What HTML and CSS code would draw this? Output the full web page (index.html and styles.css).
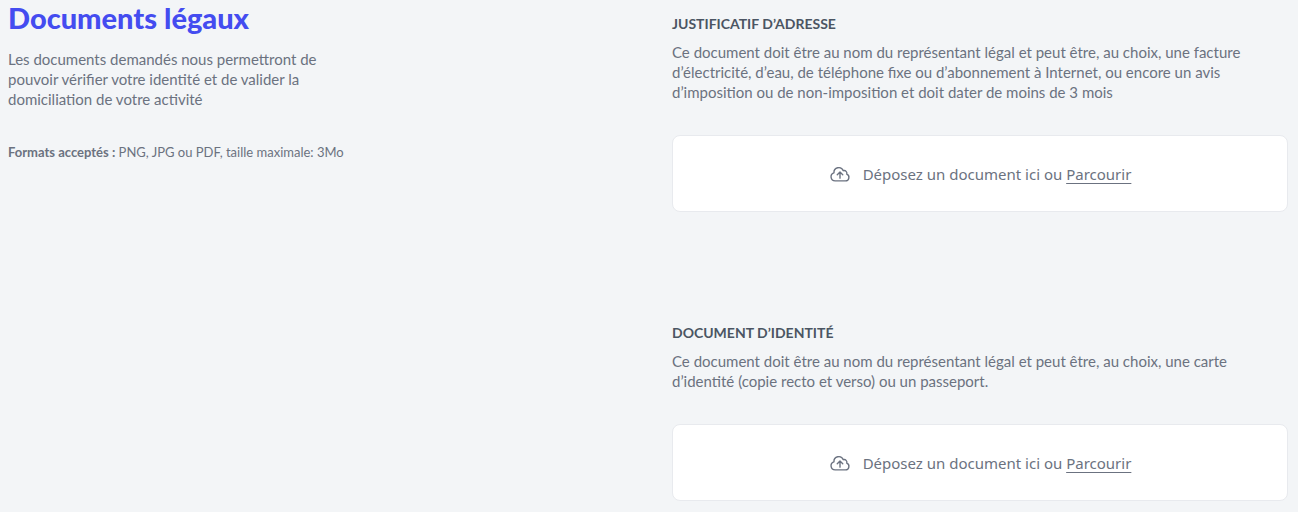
FILE: index.html
```
<!DOCTYPE html>
<html lang="fr">
<head>
    <meta charset="UTF-8">
    <meta name="viewport" content="width=device-width, initial-scale=1.0">
    <title>Documents légaux</title>
    <link rel="stylesheet" href="styles.css">
</head>

<body>
    <main class="documents">
        <section class="intro">
            <h1>Documents légaux</h1>
            <p class="description">Les documents demandés nous permettront de pouvoir vérifier votre identité et de valider la domiciliation de votre activité</p>
            <p class="formats"><strong>Formats acceptés :</strong> PNG, JPG ou PDF, taille maximale: 3Mo</p>
        </section>

        <form class="uploads">
            <section class="upload">
                <h2>Justificatif d’adresse</h2>
                <p class="description">Ce document doit être au nom du représentant légal et peut être, au choix, une facture d’électricité, d’eau, de téléphone fixe ou d’abonnement à Internet, ou encore un avis d’imposition ou de non-imposition et doit dater de moins de 3 mois</p>
                <label class="dropzone" for="adresse">
                    <svg class="upload-icon" viewBox="0 0 24 24" aria-hidden="true">
                        <path d="M6.8 19.5a4.5 4.5 0 0 1-1.4-8.8 5.3 5.3 0 0 1 10.2-2.3 3 3 0 0 1 3.8 3.8 3.8 3.8 0 0 1-1.4 7.3H6.8z"/>
                        <path d="M12 16.5V9.8m-3 3 3-3 3 3"/>
                    </svg>
                    <span>Déposez un document ici ou <span class="browse">Parcourir</span></span>
                </label>
                <input type="file" id="adresse" name="adresse" accept=".png,.jpg,.pdf">
            </section>

            <section class="upload">
                <h2>Document d’identité</h2>
                <p class="description">Ce document doit être au nom du représentant légal et peut être, au choix, une carte d’identité (copie recto et verso) ou un passeport.</p>
                <label class="dropzone" for="identite">
                    <svg class="upload-icon" viewBox="0 0 24 24" aria-hidden="true">
                        <path d="M6.8 19.5a4.5 4.5 0 0 1-1.4-8.8 5.3 5.3 0 0 1 10.2-2.3 3 3 0 0 1 3.8 3.8 3.8 3.8 0 0 1-1.4 7.3H6.8z"/>
                        <path d="M12 16.5V9.8m-3 3 3-3 3 3"/>
                    </svg>
                    <span>Déposez un document ici ou <span class="browse">Parcourir</span></span>
                </label>
                <input type="file" id="identite" name="identite" accept=".png,.jpg,.pdf">
            </section>
        </form>
    </main>
</body>
</html>
```

FILE: styles.css
```
/* General Styles */
* {
    box-sizing: border-box;
}

body {
    margin: 0;
    background-color: #f3f5f7;
    color: #6b7280;
    font-family: Lato, "Noto Sans", sans-serif;
}

h1, h2, p {
    margin: 0;
}

/* Two columns */
.documents {
    display: grid;
    grid-template-columns: 1fr 1fr;
    gap: 48px;
    padding: 0 10px 0 8px;
}

/* Left column */
h1 {
    color: #444cf0;
    font-size: 29px;
    font-weight: 900;
    line-height: 36px;
}

.description {
    font-size: 15px;
    line-height: 20px;
}

.intro .description {
    max-width: 328px;
    margin-top: 13px;
}

.formats {
    margin-top: 33px;
    font-size: 13px;
    line-height: 20px;
}

/* Right column */
.uploads {
    display: flex;
    flex-direction: column;
    gap: 111px;
    padding: 14px 0 10px;
}

.upload {
    position: relative;
}

h2 {
    margin-bottom: 8px;
    color: #4b5563;
    font-size: 14px;
    font-weight: 700;
    line-height: 20px;
    text-transform: uppercase;
}

/* Drop zone */
.dropzone {
    display: flex;
    align-items: center;
    justify-content: center;
    gap: 12px;
    min-height: 77px;
    margin-top: 33px;
    border: 1px solid #e8eaee;
    border-radius: 8px;
    background-color: #fff;
    font-family: "Noto Sans", sans-serif;
    font-size: 15px;
    line-height: 20px;
    cursor: pointer;
}

.upload-icon {
    width: 22px;
    height: 22px;
    fill: none;
    stroke: currentColor;
    stroke-width: 1.5;
    stroke-linecap: round;
    stroke-linejoin: round;
}

.browse {
    text-decoration: underline;
    text-decoration-thickness: 1px;
    text-decoration-skip-ink: none;
    text-underline-offset: 3px;
}

input[type="file"] {
    position: absolute;
    width: 1px;
    height: 1px;
    opacity: 0;
}
```
